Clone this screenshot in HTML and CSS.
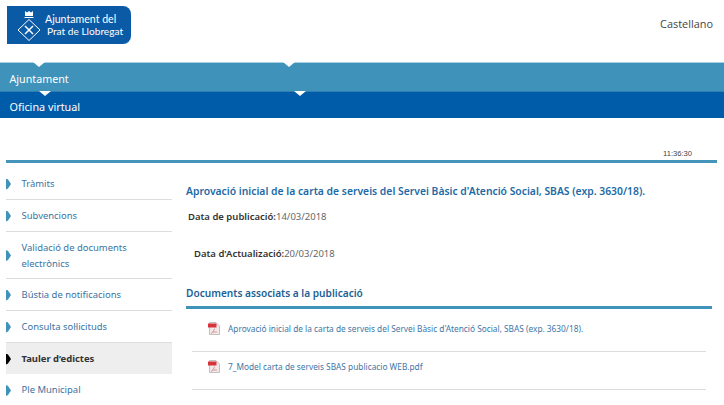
FILE: index.html
```html
<!DOCTYPE html>
<html lang="ca">
<head>
<meta charset="utf-8">
<title>Tauler d'edictes</title>
<link rel="stylesheet" href="styles.css">
</head>
<body>
<header class="top">
  <a class="logo">
    <svg class="crest" width="24" height="30" viewBox="0 0 24 30" fill="none" stroke="#fff">
      <path d="M8 0l2 1.500L12 0l2 1.500L16 0v5H8z" fill="#fff" stroke="none"/>
      <path d="M7.500 6.500h9" stroke-width="1"/>
      <path d="M12 8.500L23 19 12 29.500 1 19z" stroke-width="1"/>
      <path d="M8 15l8 8M16 15l-8 8" stroke-width="1.500"/>
    </svg>
    <span class="logo-text">Ajuntament del<br><span class="logo-l2">Prat de Llobregat</span></span>
  </a>
  <a class="lang">Castellano</a>
</header>
<nav class="nav">
  <div class="bar bar-light">
    <i class="notch notch-a"></i><i class="notch notch-b"></i>
    <span>Ajuntament</span>
  </div>
  <div class="bar bar-dark">
    <i class="notch notch-c"></i><i class="notch notch-d"></i>
    <span>Oficina virtual</span>
  </div>
</nav>
<div class="clock">11:36:30</div>
<div class="content">
  <ul class="side">
    <li><a>Tràmits</a></li>
    <li><a>Subvencions</a></li>
    <li><a>Validació de documents electrònics</a></li>
    <li><a>Bústia de notificacions</a></li>
    <li><a>Consulta sol·licituds</a></li>
    <li class="active"><a>Tauler d’edictes</a></li>
    <li><a>Ple Municipal</a></li>
  </ul>
  <main class="main">
    <h1>Aprovació inicial de la carta de serveis del Servei Bàsic d'Atenció Social, SBAS (exp. 3630/18).</h1>
    <p class="date d1"><b>Data de publicació:</b>14/03/2018</p>
    <p class="date d2"><b>Data d'Actualizació:</b>20/03/2018</p>
    <h2>Documents associats a la publicació</h2>
    <ul class="docs">
      <li>
        <svg class="pdf" width="12" height="13" viewBox="0 0 12 13"><path d="M1.500.5h6.500l3.500 3.500v8.500h-10z" fill="#eeeaea" stroke="#c4c0c0"/><path d="M0 1.500h8.500v4H0z" fill="#d8323a"/><path d="M3 11.500c2-1 3-3 3.500-5M4 10h5" stroke="#d99" fill="none"/></svg>
        <a>Aprovació inicial de la carta de serveis del Servei Bàsic d'Atenció Social, SBAS (exp. 3630/18).</a>
      </li>
      <li>
        <svg class="pdf" width="12" height="13" viewBox="0 0 12 13"><path d="M1.500.5h6.500l3.500 3.500v8.500h-10z" fill="#eeeaea" stroke="#c4c0c0"/><path d="M0 1.500h8.500v4H0z" fill="#d8323a"/><path d="M3 11.500c2-1 3-3 3.500-5M4 10h5" stroke="#d99" fill="none"/></svg>
        <a>7_Model carta de serveis SBAS publicacio WEB.pdf</a>
      </li>
    </ul>
  </main>
</div>
</body>
</html>
```
FILE: styles.css
```css
* { box-sizing: border-box; }
html, body { margin: 0; padding: 0; height: 405px; overflow: hidden; background: #fff; }
body { font-family: "Noto Sans", "Open Sans", sans-serif; font-size: 10px; color: #444; }
ul { list-style: none; margin: 0; padding: 0; }

.top { height: 62px; display: flex; justify-content: space-between; align-items: flex-start; padding: 6px 11px 0 7px; }
.logo { width: 124px; height: 38px; background: #0b5aa6; border-radius: 0 8px 8px 0; display: flex; align-items: center; padding-left: 10px; gap: 4px; color: #fff; }
.logo-text { font-family: "Lato", sans-serif; font-size: 10.600px; line-height: 12px; white-space: nowrap; margin-top: -1px; }
.logo-l2 { margin-left: 2px; font-size: 10.150px; }
.crest { flex: none; margin-top: 1px; }
.lang { margin-top: 10px; font-family: "Open Sans", sans-serif; font-size: 10.900px; color: #444; line-height: 16px; }

.bar { position: relative; color: #fff; padding-left: 9.500px; }
.bar-light { height: 29px; background: #3f92b9; border-top: 1px solid #a9d0e2; line-height: 33px; font-size: 10.700px; }
.bar-dark { height: 27px; background: #005ba8; border-top: 1px solid #2f7fb2; line-height: 29px; font-size: 10.800px; }
.notch { position: absolute; top: -1px; width: 0; height: 0; border-left: 6px solid transparent; border-right: 6px solid transparent; border-top: 5px solid #fff; }
.notch-a { left: 33px; }
.notch-b { left: 283px; }
.notch-c { left: 39px; }
.notch-d { left: 294px; }

.clock { height: 42px; padding: 30px 32px 0 0; text-align: right; font-family: "Liberation Sans", sans-serif; font-size: 7.600px; line-height: 11px; color: #444; }

.content { margin: 0 7px 0 6px; border-top: 3px solid #4494bc; display: flex; align-items: flex-start; }

.side { width: 166px; flex: none; margin-top: 5px; }
.side li { position: relative; border-bottom: 1px solid #ddd; padding: 8px 0 7px 15.500px; font-size: 9.450px; line-height: 16px; color: #3a739f; min-height: 32px; }
.side li::before { content: ""; position: absolute; left: 0; top: 50%; width: 5px; height: 11px; margin-top: -5px; background: #3f92b9; clip-path: polygon(0 0, 40% 10%, 100% 50%, 40% 90%, 0 100%); }
.side li:nth-child(3) { padding-bottom: 6px; min-height: 47px; }
.side li:last-child { border-bottom: 0; }
.side .active { background: #eee; color: #333; font-weight: 700; border-bottom: 0; min-height: 31px; padding-bottom: 7px; }
.side .active::before { background: #000; }

.main { flex: 1; min-width: 0; padding: 0 0 0 14px; }
h1 { margin: 20px 0 0; font-size: 10.350px; line-height: 16px; font-weight: 600; color: #1d6aa5; white-space: nowrap; }
.date { margin: 0; font-size: 9.500px; line-height: 14px; color: #666; white-space: nowrap; }
.date b { color: #333; font-weight: 600; }
.d1 { margin-top: 11px; padding-left: 2px; }
.d2 { margin-top: 23px; padding-left: 8px; }
h2 { margin: 25px 0 0; height: 23px; font-size: 10.150px; line-height: 15px; font-weight: 600; color: #1d5f94; border-bottom: 3px solid #3f92b9; width: 526px; }
.docs { margin: 5px 0 0 6px; width: 514px; }
.docs li { display: flex; align-items: center; height: 38px; border-bottom: 1px solid #ddd; padding: 0 0 8px 16px; gap: 8px; font-size: 8.300px; color: #3e76a6; white-space: nowrap; }
.pdf { flex: none; }
```
